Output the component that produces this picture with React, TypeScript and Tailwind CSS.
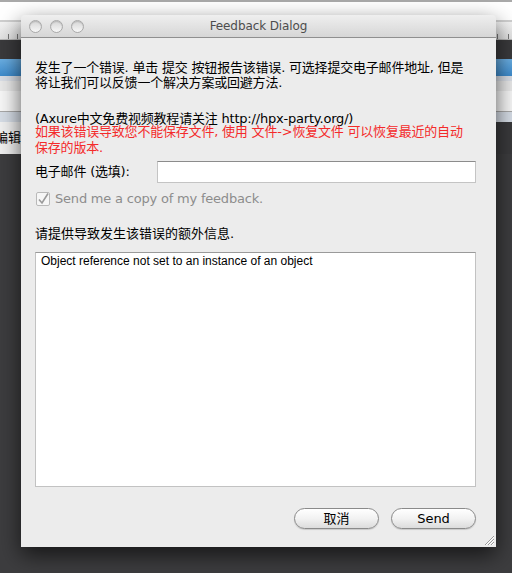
import React from "react";

const ui = "font-['DejaVu_Sans','Noto_Sans_CJK_SC',sans-serif]";

function Light() {
  return (
    <span className="block w-[13px] h-[13px] rounded-full border border-[#a9a9a9] bg-gradient-to-b from-[#d6d6d6] to-[#f7f7f7] shadow-[inset_0_1px_1px_rgba(0,0,0,0.15)]" />
  );
}

function AquaButton({ label }: { label: string }) {
  return (
    <button className="w-[85px] h-[21px] rounded-full border border-[#8a8a8a] bg-gradient-to-b from-white via-[#f2f2f2] to-[#dcdcdc] text-[13px] leading-none text-black shadow-[0_1px_1px_rgba(0,0,0,0.15)] flex items-center justify-center">
      {label}
    </button>
  );
}

export default function App() {
  const ticks = [8, 17, 497, 508];
  return (
    <div className={`relative w-[512px] h-[573px] overflow-hidden bg-[#3d3d3f] ${ui}`}>
      {/* window behind the dialog */}
      <div className="flex flex-col">
        <div className="h-[2px] bg-[#a9a9a9]" />
        <div className="h-[18px] bg-white" />
        <div className="h-[2px] bg-[#cfcfcf]" />
        <div className="relative h-[18px] bg-gradient-to-b from-[#f3f3f3] to-[#e2e2e2] border-b border-[#b8b8b8]">
          {ticks.map((x) => (
            <span key={x} className="absolute bottom-0 w-px h-[5px] bg-[#777]" style={{ left: x }} />
          ))}
        </div>
        <div className="h-[19px] bg-[#3a3a3c]" />
        <div className="h-[17px] bg-gradient-to-b from-[#6aaee2] to-[#3d8bcc]" />
        <div className="h-[5px] bg-[#d9dee6]" />
        <div className="h-[10px] bg-[#e9e9e9]" />
        <div className="h-[21px] bg-[#f7f7f7] border-b border-[#a8a8a8]" />
        <div className="h-[10px] bg-[#d6dde6]" />
        <div className="flex h-[32px]">
          <div className="w-[21px] bg-[#f0f0f0] overflow-hidden flex items-center justify-end">
            <span className="text-[13px] text-black whitespace-nowrap">编辑</span>
          </div>
          <div className="flex-1 bg-[#3a3a3c]" />
        </div>
      </div>

      {/* dialog window */}
      <div className="absolute left-[21px] top-[15px] w-[475px] h-[532px] flex flex-col bg-[#ececec] rounded-t-[4px] shadow-[0_8px_22px_rgba(0,0,0,0.65)]">
        <div className="relative h-[23px] flex items-center rounded-t-[4px] bg-gradient-to-b from-[#efefef] to-[#d6d6d6] border-b border-[#8f8f8f]">
          <div className="flex gap-[8px] ml-[8px]">
            <Light />
            <Light />
            <Light />
          </div>
          <span className="absolute inset-x-0 text-center text-[12px] text-[#4d4d4d] tracking-[-0.1px]">
            Feedback Dialog
          </span>
        </div>

        <div className="flex flex-col flex-1 pl-[14px] pr-[20px] text-[13px] text-black">
          <p className="mt-[22px] leading-[15px] tracking-[-0.2px]">
            发生了一个错误. 单击 提交 按钮报告该错误. 可选择提交电子邮件地址, 但是
            <br />
            将让我们可以反馈一个解决方案或回避方法.
          </p>
          <p className="mt-[22px] leading-[13px] h-[13px] tracking-[-0.2px]">(Axure中文免费视频教程请关注 http://hpx-party.org/)</p>
          <p className="mt-[-1px] leading-[16px] text-[#f42a2a] tracking-[-0.2px]">
            如果该错误导致您不能保存文件, 使用 文件-&gt;恢复文件 可以恢复最近的自动
            <br />
            保存的版本.
          </p>

          <div className="mt-[5px] flex items-center">
            <span className="w-[122px] shrink-0 tracking-[-0.2px]">电子邮件 (选填):</span>
            <input
              readOnly
              className="flex-1 h-[22px] bg-white border border-[#c4c4c4] border-t-[#8c8c8c] outline-none"
            />
          </div>

          <div className="mt-[8px] flex items-center gap-[5px] h-[16px] text-[#8c8c8c]">
            <svg width="14" height="14" viewBox="0 0 14 14" className="ml-[1px]">
              <rect x="0.5" y="0.5" width="13" height="13" rx="1.5" fill="#f6f6f6" stroke="#b9b9b9" />
              <path d="M3 7.5 L6 11 L12 1.5" fill="none" stroke="#9a9a9a" strokeWidth="1.6" />
            </svg>
            <span className="tracking-[-0.2px]">Send me a copy of my feedback.</span>
          </div>

          <p className="mt-[19px] leading-[16px]">请提供导致发生该错误的额外信息.</p>

          <div className="mt-[10px] h-[235px] bg-white border border-[#c2c2c2] border-t-[#9a9a9a] pl-[5px] pt-[1px] font-['Liberation_Sans',sans-serif] text-[12px] leading-[14px]">
            Object reference not set to an instance of an object
          </div>

          <div className="mt-[21px] flex justify-end gap-[12px]">
            <AquaButton label="取消" />
            <AquaButton label="Send" />
          </div>
        </div>

        <svg width="12" height="12" viewBox="0 0 12 12" className="absolute right-[1px] bottom-[1px]">
          <path d="M11 2 L2 11 M11 5 L5 11 M11 8 L8 11" stroke="#9a9a9a" strokeWidth="1" />
          <path d="M11 3 L3 11 M11 6 L6 11 M11 9 L9 11" stroke="#ffffff" strokeWidth="1" />
        </svg>
      </div>
    </div>
  );
}
